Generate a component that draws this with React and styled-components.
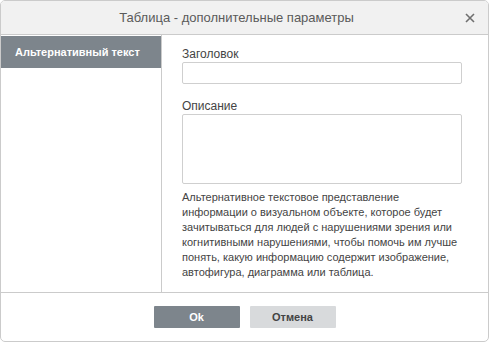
import React, { useState } from "react";
import styled, { createGlobalStyle } from "styled-components";

const GlobalStyle = createGlobalStyle`
  html, body {
    margin: 0;
    padding: 0;
    background: #ffffff;
  }
  body {
    font-family: "Liberation Sans", Arial, sans-serif;
  }
`;

export default function App() {
  const [form, setForm] = useState({ title: "", description: "" });

  const handleChange = (e) => {
    setForm({ ...form, [e.target.name]: e.target.value });
  };

  return (
    <>
      <GlobalStyle />
      <Dialog>
        <Header>
          <Title>Таблица - дополнительные параметры</Title>
          <Close aria-label="close">
            <svg width="10" height="10" viewBox="0 0 10 10">
              <path d="M1 1L9 9M9 1L1 9" stroke="#6f6f6f" strokeWidth="1.6" />
            </svg>
          </Close>
        </Header>
        <Body>
          <Sidebar>
            <SideItem active>Альтернативный текст</SideItem>
          </Sidebar>
          <Content>
            <Label>Заголовок</Label>
            <Input name="title" value={form.title} onChange={handleChange} />
            <Label top={16}>Описание</Label>
            <TextArea
              name="description"
              value={form.description}
              onChange={handleChange}
            />
            <Hint>
              Альтернативное текстовое представление информации о визуальном
              объекте, которое будет зачитываться для людей с нарушениями зрения
              или когнитивными нарушениями, чтобы помочь им лучше понять, какую
              информацию содержит изображение, автофигура, диаграмма или
              таблица.
            </Hint>
          </Content>
        </Body>
        <Footer>
          <Button primary>Ok</Button>
          <Button>Отмена</Button>
        </Footer>
      </Dialog>
    </>
  );
}

const Dialog = styled.div`
  box-sizing: border-box;
  width: 489px;
  height: 342px;
  border: 1px solid #cbcbcb;
  border-radius: 5px;
  background: #ffffff;
  display: flex;
  flex-direction: column;
  overflow: hidden;
`;
const Header = styled.div`
  position: relative;
  height: 33px;
  flex-shrink: 0;
  background: #f1f1f1;
  border-bottom: 1px solid #cbcbcb;
  display: flex;
  align-items: center;
  justify-content: center;
  padding-right: 16px;
`;
const Title = styled.div`
  font-size: 13px;
  color: #5a5a5a;
`;
const Close = styled.div`
  position: absolute;
  right: 13px;
  top: 12px;
  width: 10px;
  height: 10px;
  display: flex;
  cursor: pointer;
`;
const Body = styled.div`
  flex: 1;
  display: flex;
  min-height: 0;
`;
const Sidebar = styled.div`
  width: 160px;
  flex-shrink: 0;
  border-right: 1px solid #cbcbcb;
  padding-top: 1px;
`;
const SideItem = styled.div`
  height: 32px;
  line-height: 32px;
  padding-left: 14px;
  font-size: 11px;
  font-weight: bold;
  color: ${(p) => (p.active ? "#ffffff" : "#444444")};
  background: ${(p) => (p.active ? "#7d858c" : "transparent")};
`;
const Content = styled.div`
  flex: 1;
  padding: 13px 0 0 20px;
  display: flex;
  flex-direction: column;
`;
const Label = styled.div`
  font-size: 12px;
  color: #444444;
  height: 13px;
  line-height: 13px;
  margin-top: ${(p) => p.top || 0}px;
  margin-bottom: 1px;
`;
const Input = styled.input`
  box-sizing: border-box;
  width: 280px;
  height: 22px;
  border: 1px solid #cfcfcf;
  border-radius: 2px;
  outline: none;
  padding: 0 4px;
  font: inherit;
  font-size: 11px;
`;
const TextArea = styled.textarea`
  box-sizing: border-box;
  width: 280px;
  height: 70px;
  border: 1px solid #cfcfcf;
  border-radius: 2px;
  outline: none;
  resize: none;
  padding: 3px 4px;
  font: inherit;
  font-size: 11px;
  display: block;
`;
const Hint = styled.div`
  width: 285px;
  margin-top: 6px;
  font-size: 11px;
  line-height: 15px;
  color: #444444;
`;
const Footer = styled.div`
  height: 48px;
  flex-shrink: 0;
  border-top: 1px solid #cbcbcb;
  display: flex;
  align-items: center;
  justify-content: center;
  gap: 10px;
`;
const Button = styled.button`
  width: 86px;
  height: 22px;
  border: none;
  border-radius: 1px;
  font-family: "Liberation Sans", Arial, sans-serif;
  font-size: 11px;
  font-weight: bold;
  cursor: pointer;
  color: ${(p) => (p.primary ? "#ffffff" : "#444444")};
  background: ${(p) => (p.primary ? "#7d858c" : "#d8dadc")};
`;
